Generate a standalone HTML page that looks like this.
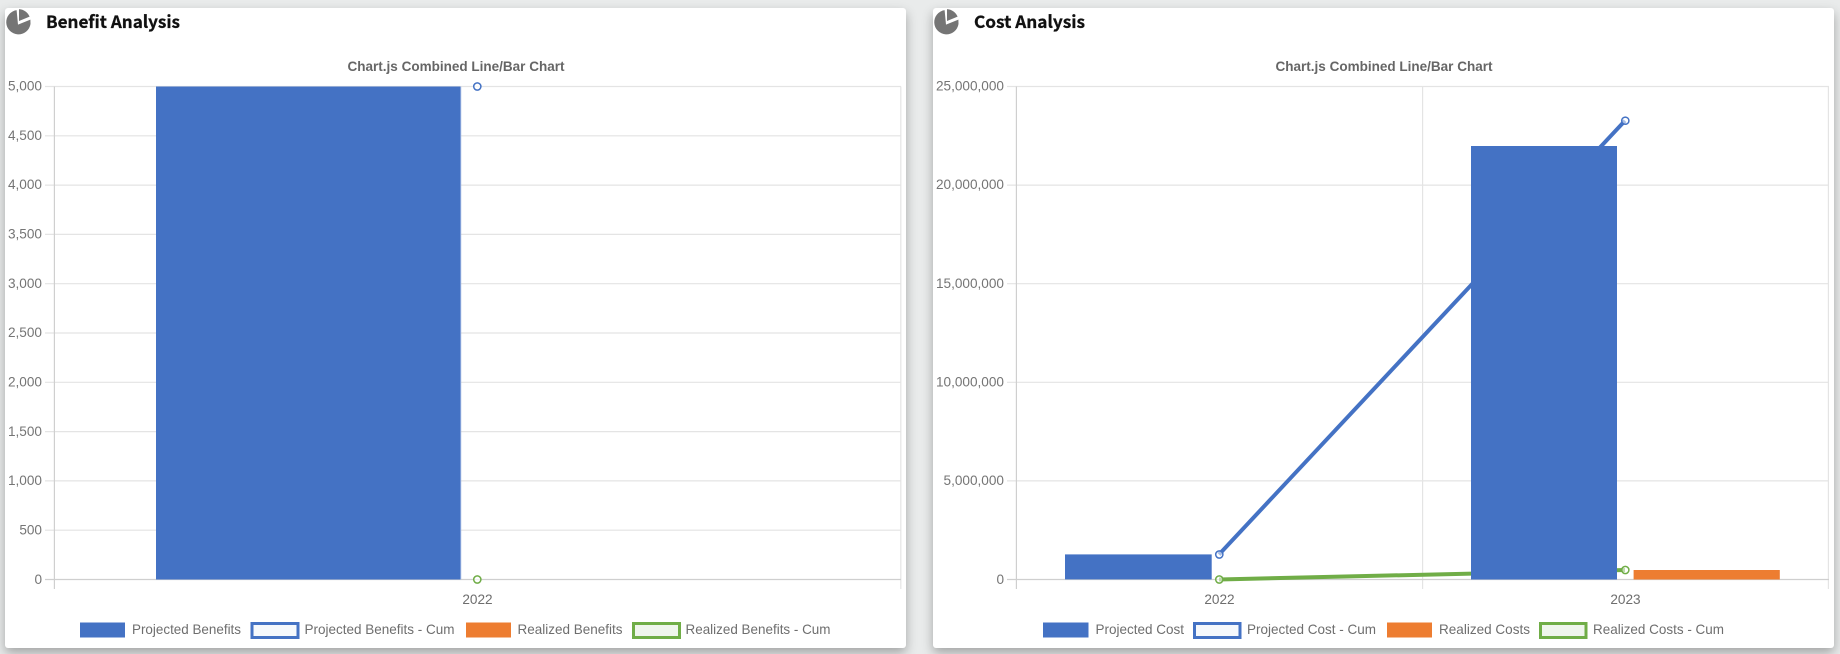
<!DOCTYPE html>
<html lang="en">
<head>
<meta charset="utf-8">
<title>Benefit and Cost Analysis</title>
<style>
html,body{margin:0;padding:0;width:1840px;height:654px;overflow:hidden;background:#e9ebeb}
.card{position:absolute;top:8px;height:640px;background:#fff;border-radius:3px;box-shadow:0 5px 11px rgba(0,0,0,.3)}
svg{position:absolute;left:0;top:0}
text{font-family:"Liberation Sans",Arial,sans-serif;font-size:13.6px;fill:#6e6e6e}
.h{font-family:"Noto Sans CJK JP","Liberation Sans",sans-serif;font-weight:700;font-size:17px;fill:#111;stroke:#111;stroke-width:.3px}
.t{font-weight:700;font-size:13.6px;fill:#666}
.e{text-anchor:end;fill:#757575}
.m{text-anchor:middle}
</style>
</head>
<body>
<div class="card" style="left:5px;width:901px"></div>
<div class="card" style="left:933px;width:901px"></div>
<svg width="1840" height="654" viewBox="0 0 1840 654">
<!-- Icons -->
<g fill="#757575">
<path d="M16.6 10.1A12.2 12.2 0 1 0 30.5 24L30.4 19.6 18 24.6Z"/>
<path d="M19 9.1A12.2 12.2 0 0 1 29.6 16.6L19 21Z"/>
<path d="M944.6 10.1A12.2 12.2 0 1 0 958.5 24L958.4 19.6 946 24.6Z"/>
<path d="M947 9.1A12.2 12.2 0 0 1 957.6 16.6L947 21Z"/>
</g>
<text class="h" x="46" y="28" textLength="134" lengthAdjust="spacingAndGlyphs">Benefit Analysis</text>
<text class="h" x="974" y="28" textLength="111" lengthAdjust="spacingAndGlyphs">Cost Analysis</text>
<text class="t m" x="456" y="71" textLength="217" lengthAdjust="spacingAndGlyphs">Chart.js Combined Line/Bar Chart</text>
<text class="t m" x="1384" y="71" textLength="217" lengthAdjust="spacingAndGlyphs">Chart.js Combined Line/Bar Chart</text>

<!-- Chart 1 grid -->
<g stroke="#e4e4e4" stroke-width="1.2" fill="none">
<path d="M45 86.5H901M45 135.8H901M45 185.1H901M45 234.4H901M45 283.7H901M45 333H901M45 382.3H901M45 431.6H901M45 480.9H901M45 530.2H901"/>
<path d="M900.8 86.5V589"/>
</g>
<path d="M45 579.5H901M54.4 86.5V589" stroke="#cfcfcf" stroke-width="1.2" fill="none"/>
<!-- Chart 1 bar & points -->
<rect x="156" y="86.5" width="304.7" height="493" fill="#4472c4"/>
<path d="M460.7 86.5V579.5" stroke="#8faadc" stroke-width="1"/>
<circle cx="477.3" cy="86.5" r="3.6" fill="#fff" fill-opacity=".7" stroke="#4472c4" stroke-width="1.5"/>
<circle cx="477.3" cy="579.5" r="3.6" fill="#fff" fill-opacity=".7" stroke="#70ad47" stroke-width="1.5"/>
<!-- Chart 1 labels -->
<g>
<text class="e" x="42" y="90.5">5,000</text>
<text class="e" x="42" y="140">4,500</text>
<text class="e" x="42" y="189">4,000</text>
<text class="e" x="42" y="238.5">3,500</text>
<text class="e" x="42" y="288">3,000</text>
<text class="e" x="42" y="337">2,500</text>
<text class="e" x="42" y="386.5">2,000</text>
<text class="e" x="42" y="436">1,500</text>
<text class="e" x="42" y="485">1,000</text>
<text class="e" x="42" y="534.5">500</text>
<text class="e" x="42" y="584">0</text>
</g>
<text class="m" x="477.5" y="604">2022</text>
<!-- Chart 1 legend -->
<rect x="80" y="622.5" width="45" height="15" fill="#4472c4"/>
<text x="132" y="634" textLength="109" lengthAdjust="spacingAndGlyphs">Projected Benefits</text>
<rect x="252" y="623.5" width="46" height="14" fill="#f5f8fc" stroke="#4472c4" stroke-width="3"/>
<text x="304.5" y="634" textLength="150" lengthAdjust="spacingAndGlyphs">Projected Benefits - Cum</text>
<rect x="466" y="622.5" width="45" height="15" fill="#ed7d31"/>
<text x="517.5" y="634" textLength="105" lengthAdjust="spacingAndGlyphs">Realized Benefits</text>
<rect x="633.5" y="623.5" width="46" height="14" fill="#eff5ec" stroke="#70ad47" stroke-width="3"/>
<text x="685.5" y="634" textLength="145" lengthAdjust="spacingAndGlyphs">Realized Benefits - Cum</text>

<!-- Chart 2 grid -->
<g stroke="#e4e4e4" stroke-width="1.2" fill="none">
<path d="M1007 86.5H1829M1007 185.1H1829M1007 283.7H1829M1007 382.3H1829M1007 480.9H1829"/>
<path d="M1422.6 86.5V589M1828.4 86.5V589"/>
</g>
<path d="M1007 579.5H1829M1016.4 86.5V589" stroke="#cfcfcf" stroke-width="1.2" fill="none"/>
<!-- Chart 2 lines -->
<path d="M1219 554.5L1625 120.7" stroke="#4472c4" stroke-width="4" fill="none"/>
<path d="M1219 579.5L1625 570" stroke="#70ad47" stroke-width="4" fill="none"/>
<!-- Chart 2 bars -->
<rect x="1065" y="554.4" width="146.7" height="25" fill="#4472c4"/>
<rect x="1471" y="146" width="146" height="433.5" fill="#4472c4"/>
<rect x="1633.6" y="570" width="146.2" height="9.5" fill="#ed7d31"/>
<!-- Chart 2 points -->
<circle cx="1219.3" cy="554.5" r="3.6" fill="#fff" fill-opacity=".55" stroke="#4472c4" stroke-width="1.5"/>
<circle cx="1625.3" cy="120.7" r="3.6" fill="#fff" fill-opacity=".55" stroke="#4472c4" stroke-width="1.5"/>
<circle cx="1219.3" cy="579.5" r="3.6" fill="#fff" fill-opacity=".55" stroke="#70ad47" stroke-width="1.5"/>
<circle cx="1625.3" cy="570" r="3.6" fill="#fff" fill-opacity=".55" stroke="#70ad47" stroke-width="1.5"/>
<!-- Chart 2 labels -->
<text class="e" x="1004" y="90.5">25,000,000</text>
<text class="e" x="1004" y="189">20,000,000</text>
<text class="e" x="1004" y="288">15,000,000</text>
<text class="e" x="1004" y="386.5">10,000,000</text>
<text class="e" x="1004" y="485">5,000,000</text>
<text class="e" x="1004" y="584">0</text>
<text class="m" x="1219.5" y="604">2022</text>
<text class="m" x="1625.5" y="604">2023</text>
<!-- Chart 2 legend -->
<rect x="1043" y="622.5" width="45.5" height="15" fill="#4472c4"/>
<text x="1095.5" y="634" textLength="88.5" lengthAdjust="spacingAndGlyphs">Projected Cost</text>
<rect x="1194.5" y="623.5" width="45.5" height="14" fill="#f5f8fc" stroke="#4472c4" stroke-width="3"/>
<text x="1247" y="634" textLength="129" lengthAdjust="spacingAndGlyphs">Projected Cost - Cum</text>
<rect x="1387" y="622.5" width="45" height="15" fill="#ed7d31"/>
<text x="1439" y="634" textLength="91" lengthAdjust="spacingAndGlyphs">Realized Costs</text>
<rect x="1540.5" y="623.5" width="45.5" height="14" fill="#eff5ec" stroke="#70ad47" stroke-width="3"/>
<text x="1593" y="634" textLength="131" lengthAdjust="spacingAndGlyphs">Realized Costs - Cum</text>
</svg>
</body>
</html>
